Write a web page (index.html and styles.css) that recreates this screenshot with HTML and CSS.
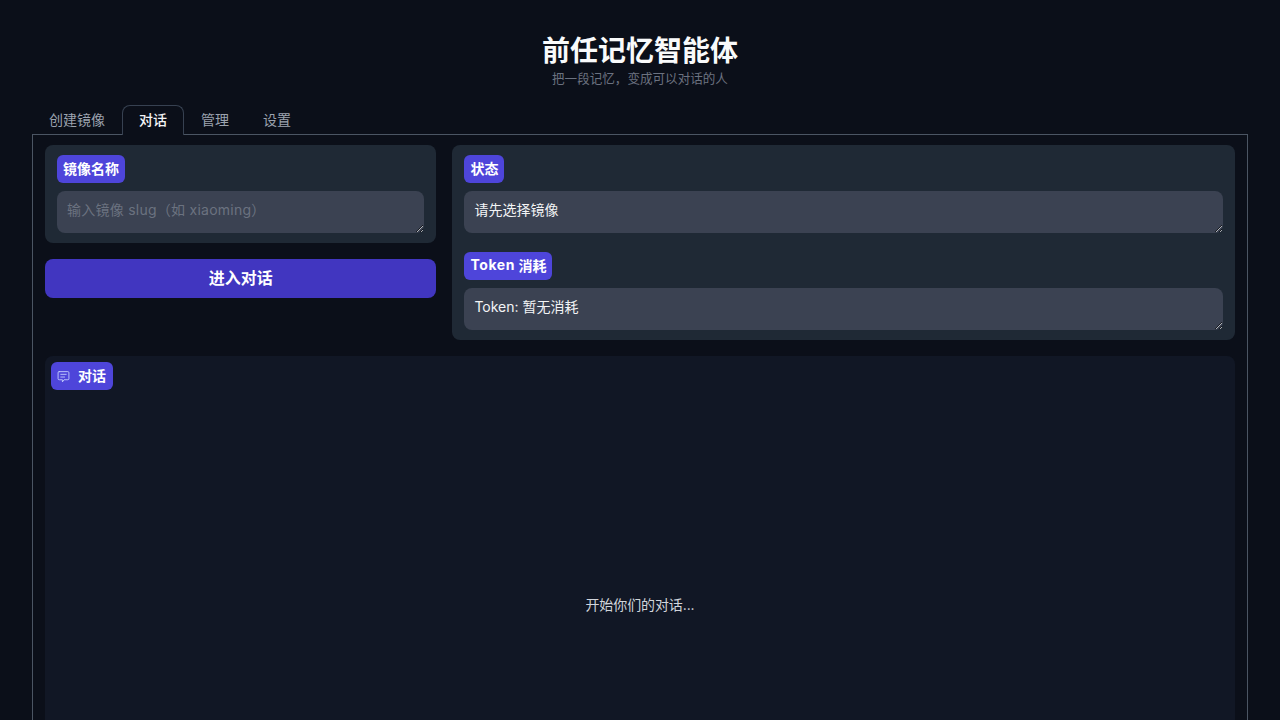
FILE: index.html
```html
<!DOCTYPE html>
<html lang="zh-CN">
<head>
    <meta charset="UTF-8">
    <meta name="viewport" content="width=device-width, initial-scale=1.0">
    <title>前任记忆智能体</title>
    <link rel="stylesheet" href="styles.css">
</head>
<body>
    <div class="app">
        <header class="page-header">
            <h1>前任记忆智能体</h1>
            <p>把一段记忆，变成可以对话的人</p>
        </header>

        <nav class="tabs">
            <button class="tab">创建镜像</button>
            <button class="tab active">对话</button>
            <button class="tab">管理</button>
            <button class="tab">设置</button>
        </nav>

        <main class="tab-panel">
            <div class="top-row">
                <div class="left-col">
                    <div class="block">
                        <label class="field">
                            <span class="badge">镜像名称</span>
                            <textarea class="input" rows="1" placeholder="输入镜像 slug（如 xiaoming）"></textarea>
                        </label>
                    </div>
                    <button class="primary-btn">进入对话</button>
                </div>

                <div class="block right-col">
                    <label class="field">
                        <span class="badge">状态</span>
                        <textarea class="input" rows="1" readonly>请先选择镜像</textarea>
                    </label>
                    <label class="field">
                        <span class="badge"><span class="latin">Token</span>&nbsp;消耗</span>
                        <textarea class="input" rows="1" readonly>Token: 暂无消耗</textarea>
                    </label>
                </div>
            </div>

            <section class="chat">
                <span class="badge chat-badge">
                    <svg class="chat-icon" viewBox="0 0 24 24" fill="none" stroke="currentColor" stroke-width="1.6" stroke-linecap="round" stroke-linejoin="round">
                        <path d="M4 3h16a2 2 0 0 1 2 2v11a2 2 0 0 1-2 2h-7l-3 4v-4H4a2 2 0 0 1-2-2V5a2 2 0 0 1 2-2z"/>
                        <path d="M7 8h10M7 13h7"/>
                    </svg>
                    对话
                </span>
                <div class="chat-empty">开始你们的对话...</div>
            </section>
        </main>
    </div>
</body>
</html>
```

FILE: styles.css
```css
* {
    box-sizing: border-box;
}

body {
    margin: 0;
    background: #0b0f19;
    color: #f3f4f6;
    font-family: Inter, "Noto Sans CJK SC", sans-serif;
}

.app {
    padding: 33px 32px 16px;
}

.page-header {
    text-align: center;
    margin-bottom: 17px;
}

.page-header h1 {
    margin: 0;
    font-size: 28px;
    line-height: 36px;
    font-weight: 700;
    color: #f9fafb;
}

.page-header p {
    margin: 1px 0 0;
    font-size: 12.57px;
    line-height: 18px;
    color: #6b7280;
}

.tabs {
    display: flex;
    height: 29px;
}

.tab {
    background: none;
    border: 1px solid transparent;
    border-bottom: none;
    border-radius: 8px 8px 0 0;
    padding: 0 16px 2px;
    height: 29px;
    font: inherit;
    font-size: 14px;
    color: #9ca3af;
    cursor: pointer;
}

.tab.active {
    position: relative;
    z-index: 1;
    height: 30px;
    padding-bottom: 3px;
    background: #0b0f19;
    border-color: #374151;
    color: #f3f4f6;
    font-weight: 500;
}

.tab-panel {
    border: 1px solid #4b5563;
    padding: 10px 12px 16px;
}

.top-row {
    display: grid;
    grid-template-columns: 391.4px 1fr;
    align-items: start;
    gap: 16px;
    margin-bottom: 16px;
}

.left-col {
    display: flex;
    flex-direction: column;
    gap: 16px;
}

.right-col {
    display: flex;
    flex-direction: column;
    gap: 19px;
}

.block {
    background: #1f2935;
    border-radius: 8px;
    padding: 10px 12px;
}

.field {
    display: flex;
    flex-direction: column;
    align-items: flex-start;
    gap: 8px;
}

.badge {
    display: inline-flex;
    align-items: center;
    height: 28px;
    padding: 0 6px 3px;
    background: #4e45da;
    border-radius: 6px;
    font-size: 14px;
    font-weight: 700;
    color: #ffffff;
}

.latin {
    letter-spacing: 0.6px;
}

.input {
    display: block;
    width: 100%;
    height: 42px;
    padding: 9px 10px;
    background: #3b4252;
    border: none;
    border-radius: 8px;
    outline: none;
    font: inherit;
    font-size: 14px;
    line-height: 20px;
    color: #f3f4f6;
}

.input::placeholder {
    color: #6b7280;
    letter-spacing: 0.25px;
}

.primary-btn {
    height: 39px;
    padding: 0 0 3px;
    background: #4136c0;
    border: none;
    border-radius: 8px;
    font: inherit;
    font-size: 16px;
    font-weight: 700;
    color: #ffffff;
    cursor: pointer;
}

.chat {
    position: relative;
    height: 496px;
    background: #111725;
    border-radius: 8px;
    display: flex;
    align-items: center;
    justify-content: center;
}

.chat-badge {
    position: absolute;
    top: 6px;
    left: 6px;
    gap: 8px;
    padding: 0 7px 3px 6px;
}

.chat-icon {
    width: 13px;
    height: 13px;
    margin-top: 3px;
    color: #c7d2fe;
}

.chat-empty {
    font-size: 14px;
    letter-spacing: -0.1px;
    color: #d1d5db;
}
```
